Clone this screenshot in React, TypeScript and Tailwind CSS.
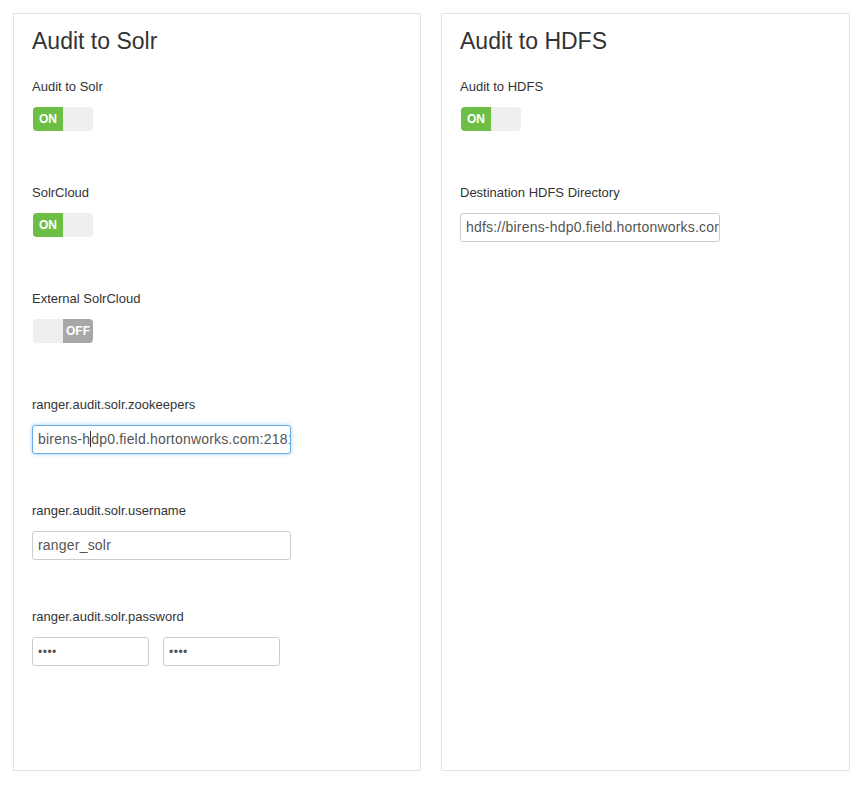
import React from 'react';

function Toggle({ on }: { on: boolean }) {
  return (
    <div className="ml-[1px] mt-[1px] flex h-[24px] w-[60px] overflow-hidden rounded-[4px] bg-[#efefef] text-[12px] font-bold leading-[24px] text-white">
      {on ? (
        <>
          <div className="w-[30px] bg-[#6cbe45] text-center">ON</div>
          <div className="flex-1" />
        </>
      ) : (
        <>
          <div className="flex-1" />
          <div className="w-[30px] bg-[#a7a7a7] text-center">OFF</div>
        </>
      )}
    </div>
  );
}

function TextBox({ value, width, focused }: { value: React.ReactNode; width: string; focused?: boolean }) {
  return (
    <div
      className={`${width} h-[29px] overflow-hidden whitespace-nowrap rounded-[3px] border bg-white pl-[5px] text-[14px] leading-[27px] tracking-[0.2px] text-[#555] ${
        focused ? 'border-[#66afe9] shadow-[0_0_4px_rgba(102,175,233,0.6)]' : 'border-[#cccccc]'
      }`}
    >
      {value}
    </div>
  );
}

function Field({ label, children }: { label: string; children: React.ReactNode }) {
  return (
    <div className="h-[106px]">
      <div className="text-[13px] leading-[18px] text-[#333]">{label}</div>
      <div className="mt-[11px]">{children}</div>
    </div>
  );
}

function Panel({ title, width, children }: { title: string; width: string; children: React.ReactNode }) {
  return (
    <div className={`${width} h-[758px] border border-[#e3e3e3] bg-white px-[18px] pt-[15px]`}>
      <h3 className="text-[23px] leading-[25px] text-[#333]">{title}</h3>
      <div className="mt-[24px]">{children}</div>
    </div>
  );
}

const dots = <span className="text-[12px] tracking-[0.5px] text-[#555]">••••</span>;

export default function App() {
  return (
    <div className="min-h-screen bg-white pl-[13px] pt-[13px] font-['Liberation_Sans',Arial,sans-serif]">
      <div className="flex gap-[20px]">
        <Panel title="Audit to Solr" width="w-[408px]">
          <Field label="Audit to Solr">
            <Toggle on />
          </Field>
          <Field label="SolrCloud">
            <Toggle on />
          </Field>
          <Field label="External SolrCloud">
            <Toggle on={false} />
          </Field>
          <Field label="ranger.audit.solr.zookeepers">
            <TextBox
              width="w-[259px]"
              focused
              value={
                <>
                  birens-h
                  <span className="inline-block h-[16px] w-px translate-y-[3px] bg-[#333]" />
                  dp0.field.hortonworks.com:2181
                </>
              }
            />
          </Field>
          <Field label="ranger.audit.solr.username">
            <TextBox width="w-[259px]" value="ranger_solr" />
          </Field>
          <Field label="ranger.audit.solr.password">
            <div className="flex gap-[14px]">
              <TextBox width="w-[117px]" value={dots} />
              <TextBox width="w-[117px]" value={dots} />
            </div>
          </Field>
        </Panel>
        <Panel title="Audit to HDFS" width="w-[409px]">
          <Field label="Audit to HDFS">
            <Toggle on />
          </Field>
          <Field label="Destination HDFS Directory">
            <TextBox width="w-[260px]" value="hdfs://birens-hdp0.field.hortonworks.com:8020/ranger/audit" />
          </Field>
        </Panel>
      </div>
    </div>
  );
}
